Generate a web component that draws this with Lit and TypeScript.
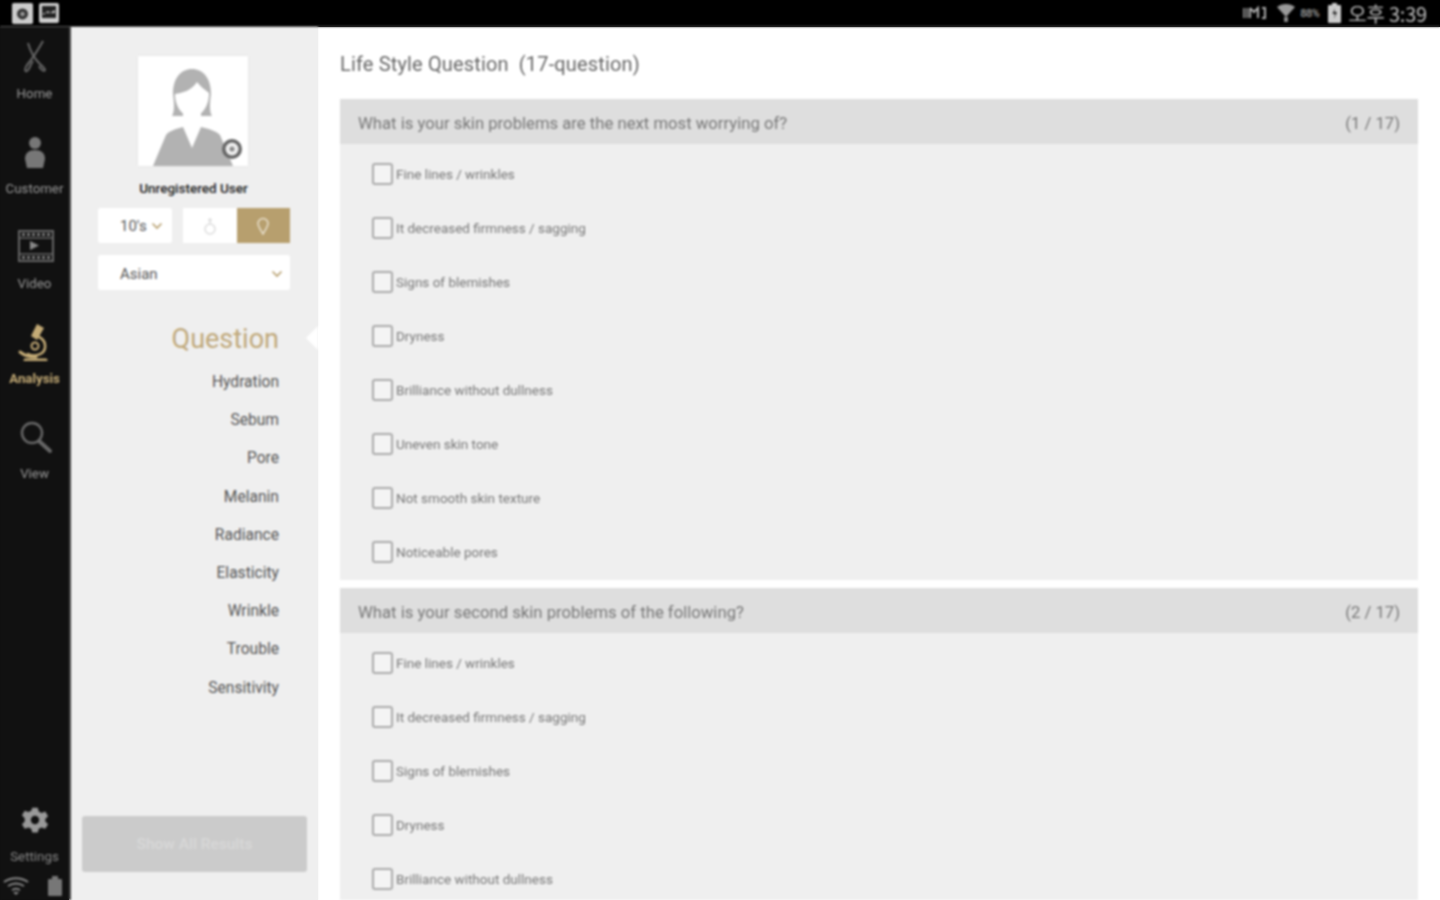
import { LitElement, html, css, svg } from "lit";
import { customElement } from "lit/decorators.js";

const OPTIONS = [
  "Fine lines / wrinkles",
  "It decreased firmness / sagging",
  "Signs of blemishes",
  "Dryness",
  "Brilliance without dullness",
  "Uneven skin tone",
  "Not smooth skin texture",
  "Noticeable pores",
];
const STEPS = ["Hydration", "Sebum", "Pore", "Melanin", "Radiance", "Elasticity", "Wrinkle", "Trouble", "Sensitivity"];

const chevron = (c: string) => html`<svg width="12" height="8" viewBox="0 0 12 8"><path d="M1.5 1.5 6 6l4.5-4.5" fill="none" stroke=${c} stroke-width="1.6"/></svg>`;

const NAV = [
  {
    label: "Home",
    icon: svg`<path d="M43 5C38 14 32 23 27 29c-3 4-2 7 0 6 3-2 3-6 6-10M28 7c2 7 6 15 11 20 3 3 6 5 6 7-1 2-4 0-6-4" fill="none" stroke="#666" stroke-width="2"/>`,
  },
  {
    label: "Customer",
    icon: svg`<circle cx="35" cy="12" r="6" fill="#777"/><path d="M25 28c0-6 4-9 10-9s10 3 10 9l-2 9H27z" fill="#777"/>`,
  },
  {
    label: "Video",
    icon: svg`<rect x="19" y="5" width="34" height="30" fill="none" stroke="#666" stroke-width="2"/><path d="M19 12h34M19 28h34" stroke="#666" stroke-width="1.500"/><path d="M22 8.500h30M22 31.500h30" stroke="#777" stroke-width="3" stroke-dasharray="3 2"/><path d="M30 15v9l9-4.500z" fill="#888"/>`,
  },
  {
    label: "Analysis",
    active: true,
    icon: svg`<g fill="none" stroke="#c4ab76" stroke-linecap="round"><path d="M37 3l7 4-7 12-6-4z" fill="#c4ab76" stroke="none"/><path d="M39 16c7 3 8 12 3 16-4 3-10 3-14 1" stroke-width="2.500"/><circle cx="35" cy="25" r="3.500" stroke-width="2"/><path d="M20 31c5 4 11 5 16 5" stroke-width="3"/><path d="M25 39h21" stroke-width="3"/></g>`,
  },
  {
    label: "View",
    icon: svg`<circle cx="32" cy="17" r="10" fill="none" stroke="#666" stroke-width="2.500"/><path d="M39 25l11 10" stroke="#666" stroke-width="4" stroke-linecap="round"/>`,
  },
];

@customElement("app-root")
export class AppRoot extends LitElement {
  static styles = css`
    :host { display: block; width: 1440px; height: 900px; overflow: hidden; background: linear-gradient(#000 27px, transparent 27px), linear-gradient(90deg, #111 69px, #efefef 69px, #efefef 318px, #fff 318px); font-family: Roboto, "Noto Sans CJK KR", sans-serif; }
    .page { width: 1440px; height: 900px; display: flex; flex-direction: column; filter: blur(0.8px); }
    .status { height: 27px; flex: none; background: #000; display: flex; align-items: center; justify-content: space-between; padding: 0 13px 0 12px; border-bottom: 1px solid #555; box-sizing: border-box; }
    .status-left, .status-right { display: flex; align-items: center; gap: 6px; }
    .status-right { color: #bbb; gap: 4px; }
    .status-right .pct { font-size: 11px; color: #888; font-weight: 700; letter-spacing: -0.5px; width: 24px; }
    .clock { font-family: "Noto Sans CJK KR", Roboto, sans-serif; font-size: 20px; margin: 2px 0 0 3px; letter-spacing: -0.2px; line-height: 22px; }
    .body { flex: 1; display: flex; min-height: 0; }
    .rail { width: 69px; flex: none; background: #111; border-right: 2px solid #444; display: flex; flex-direction: column; align-items: center; box-sizing: content-box; }
    .nav { display: flex; flex-direction: column; align-items: center; }
    .nav-item { height: 95px; width: 69px; display: flex; flex-direction: column; align-items: center; font-size: 13.300px; color: #999; }
    .nav-item svg { display: block; margin-top: 9px; height: 40px; width: 69px; }
    .nav-item span { margin-top: 11px; line-height: 14px; }
    .nav-item.active span { color: #c4ab76; font-weight: 700; }
    .rail-bottom { margin-top: auto; width: 69px; display: flex; flex-direction: column; align-items: center; }
    .gear-label { font-size: 13.300px; color: #888; margin-top: 15px; line-height: 14px; }
    .rail-icons { display: flex; justify-content: space-between; width: 69px; margin: 11px 0 3px; padding: 0 6px 0 3px; box-sizing: border-box; height: 22px; align-items: center; }
    .panel { width: 247px; flex: none; background: #efefef; display: flex; flex-direction: column; align-items: stretch; position: relative; }
    .avatar { width: 110px; height: 110px; margin: 29px 0 0 67px; background: #fff; position: relative; box-shadow: 0 0 2px #ddd; }
    .avatar svg { display: block; }
    .user { text-align: center; font-size: 13.500px; color: #222; margin: 15px 0 0; line-height: 14px; font-weight: 500; padding-right: 2px; }
    .sel-row { display: flex; gap: 11px; margin: 13px 28px 0 27px; height: 35px; }
    .age { width: 74px; background: #fff; display: flex; align-items: center; justify-content: flex-start; gap: 4px; font-size: 15px; color: #555; border-radius: 2px; padding: 1px 0 0 22px; box-sizing: border-box; }
    .gender { flex: 1; display: flex; }
    .gender div { flex: 1; display: flex; align-items: center; justify-content: center; background: #fff; }
    .gender div.on { background: #b79f6e; }
    .race { margin: 12px 28px 0 27px; height: 35px; background: #fff; display: flex; align-items: center; justify-content: space-between; padding: 2px 7px 0 22px; box-sizing: border-box; font-size: 15px; color: #555; border-radius: 2px; }
    .steps { margin-top: 31px; display: flex; flex-direction: column; align-items: flex-end; padding-right: 39px; position: relative; }
    .steps .q { font-size: 27px; line-height: 36px; color: #bfa87a; margin-bottom: 6px; }
    .steps .s { font-size: 15.600px; height: 38.200px; line-height: 38.200px; color: #555; }
    .notch { position: absolute; right: 0; top: 5px; width: 0; height: 0; border: 12px solid transparent; border-right-color: #fff; border-left-width: 0; }
    .btn { margin: auto 11px 28px 11px; height: 56px; flex: none; background: #cbcbcb; border-radius: 3px; display: flex; align-items: center; justify-content: center; color: #d8d8d8; font-size: 15.500px; font-weight: 500; }
    .main { flex: 1; min-width: 0; overflow: hidden; padding: 0 22px 0 22px; }
    h1 { margin: 23px 0 0; font-size: 20px; line-height: 28px; font-weight: 400; color: #666; white-space: pre; letter-spacing: 0.15px; }
    .card { margin-top: 8px; background: #efefef; padding-bottom: 1px; }
    h1 + .card { margin-top: 21px; }
    .card-h { height: 45px; background: #dedede; display: flex; align-items: center; justify-content: space-between; padding: 3px 18px 0; box-sizing: border-box; font-size: 16.700px; color: #777; }
    .opts { padding: 3px 0 0 32px; }
    .opt { height: 54px; display: flex; align-items: center; font-size: 13.500px; color: #777; }
    .box { width: 17px; height: 18px; border: 2px solid #aaa; border-radius: 3px; background: #f4f4f4; margin-right: 3px; flex: none; }
  `;

  private card(title: string, n: string, opts: string[]) {
    return html`<section class="card">
      <div class="card-h"><span>${title}</span><span>${n}</span></div>
      <div class="opts">
        ${opts.map((o) => html`<div class="opt"><div class="box"></div><span>${o}</span></div>`)}
      </div>
    </section>`;
  }

  render() {
    return html`<div class="page">
      <div class="status">
        <div class="status-left">
          <svg width="21" height="21" viewBox="0 0 23 23"><rect width="23" height="23" rx="2" fill="#ccc"/><circle cx="11.500" cy="12" r="6" fill="#333"/><circle cx="11.500" cy="12" r="2.500" fill="#999"/></svg>
          <svg width="20" height="20" viewBox="0 0 20 20"><rect width="20" height="20" rx="2" fill="#ccc"/><rect x="3" y="3" width="14" height="12" fill="#222"/><path d="M4 12l5-4 2 2 5-3v3H4z" fill="#ccc"/></svg>
        </div>
        <div class="status-right">
          <svg width="28" height="16" viewBox="0 0 28 16" style="margin-right:2px"><path d="M2 3v10M5 3v10" stroke="#aaa" stroke-width="1.500"/><path d="M8 3l4 4 4-4v10M8 3v10M20 3h3v10h-3" fill="none" stroke="#aaa" stroke-width="2"/></svg>
          <svg width="20" height="20" viewBox="0 0 20 20"><path d="M1 4c5-4 13-4 18 0l-9 10z" fill="#999"/><rect x="8" y="14" width="4" height="5" fill="#888"/></svg>
          <span class="pct">88%</span>
          <svg width="13" height="20" viewBox="0 0 13 20"><rect y="2" width="13" height="18" rx="1" fill="#ccc"/><rect x="4" width="5" height="3" fill="#ccc"/><path d="M7 5L4.500 11H7l-1 5 3-7H6.500z" fill="#222"/></svg>
          <span class="clock">오후 3:39</span>
        </div>
      </div>
      <div class="body">
        <nav class="rail">
          <div class="nav">
            ${NAV.map((n) => html`<div class="nav-item ${n.active ? "active" : ""}"><svg viewBox="0 0 69 40">${n.icon}</svg><span>${n.label}</span></div>`)}
          </div>
          <div class="rail-bottom">
            <svg width="28" height="30" viewBox="0 0 30 30"><path fill="#999" fill-rule="evenodd" d="M12 2h6l1 4 3 1.500 4-1.500 3 5-3 3v2.500l3 3-3 5-4-1.500-3 1.500-1 4h-6l-1-4-3-1.500-4 1.500-3-5 3-3V13L1 10l3-5 4 1.500L11 5zM15 10.500a4.500 4.500 0 1 0 0 9 4.500 4.500 0 0 0 0-9z"/></svg>
            <span class="gear-label">Settings</span>
            <div class="rail-icons">
              <svg width="26" height="18" viewBox="0 0 26 18"><path d="M1 5c7-5 17-5 24 0M5 9c5-3 11-3 16 0M9 13c3-2 5-2 8 0" fill="none" stroke="#888" stroke-width="2"/><path d="M13 18l-3-3h6z" fill="#888"/></svg>
              <svg width="16" height="20" viewBox="0 0 16 20"><rect x="1" y="3" width="14" height="17" rx="1" fill="#777"/><rect x="5" y="0" width="6" height="3" fill="#777"/></svg>
            </div>
          </div>
        </nav>
        <aside class="panel">
          <div class="avatar">
            <svg width="110" height="110" viewBox="0 0 110 110">
              <path d="M15 110l13-31c3-4 10-6 17-8l9 21 9-21c8 2 15 4 19 8l13 31z" fill="#b2b2b2"/>
              <path d="M34 60c3-5 2-14 1-22 0-16 8-25 19-25s19 9 19 25c-1 8-2 17 1 22z" fill="#b2b2b2"/>
              <path d="M37 38c8-1 17-4 22-12 3 4 8 8 12 11 0 14-8 24-17 24s-17-10-17-23z" fill="#fff"/>
              <path d="M45 57h18v11l-9 22-9-22z" fill="#fff"/>
              <circle cx="94" cy="93" r="10" fill="#666"/><circle cx="94" cy="93" r="6.500" fill="#eee"/><circle cx="94" cy="93" r="2.500" fill="#888"/>
            </svg>
          </div>
          <div class="user">Unregistered User</div>
          <div class="sel-row">
            <div class="age"><span>10's</span>${chevron("#b79f6e")}</div>
            <div class="gender">
              <div><svg width="14" height="18" viewBox="0 0 14 18"><circle cx="7" cy="12" r="5" fill="none" stroke="#ddd" stroke-width="1.500"/><path d="M7 7V1M5 3h4" stroke="#ddd" stroke-width="1.500"/></svg></div>
              <div class="on"><svg width="14" height="18" viewBox="0 0 14 18"><path d="M7 17C4 12 2 9 2 6.500a5 5 0 0 1 10 0C12 9 10 12 7 17z" fill="none" stroke="#e8dfcc" stroke-width="1.500"/></svg></div>
            </div>
          </div>
          <div class="race"><span>Asian</span>${chevron("#b79f6e")}</div>
          <div class="steps">
            <i class="notch"></i>
            <div class="q">Question</div>
            ${STEPS.map((s) => html`<div class="s">${s}</div>`)}
          </div>
          <div class="btn">Show All Results</div>
        </aside>
        <main class="main">
          <h1>Life Style Question  (17-question)</h1>
          ${this.card("What is your skin problems are the next most worrying of?", "(1 / 17)", OPTIONS)}
          ${this.card("What is your second skin problems of the following?", "(2 / 17)", OPTIONS.slice(0, 5))}
        </main>
      </div>
    </div>`;
  }
}
